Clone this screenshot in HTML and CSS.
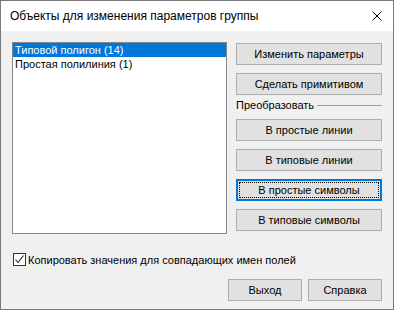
FILE: index.html
```html
<!DOCTYPE html>
<html lang="ru">
<head>
<meta charset="utf-8">
<title>Объекты для изменения параметров группы</title>
<link rel="stylesheet" href="styles.css">
</head>
<body>
<div class="window">
  <div class="titlebar">
    <span class="title">Объекты для изменения параметров группы</span>
    <span class="close">
      <svg width="10" height="10" viewBox="0 0 10 10"><path d="M0.5 0.5 L9.5 9.5 M9.5 0.5 L0.5 9.5" stroke="#000" stroke-width="1" fill="none"/></svg>
    </span>
  </div>
  <div class="content">
    <div class="top">
      <div class="list">
        <div class="item selected">Типовой полигон (14)</div>
        <div class="item">Простая полилиния (1)</div>
      </div>
      <div class="side">
        <button class="btn first">Изменить параметры</button>
        <button class="btn">Сделать примитивом</button>
        <div class="group-label"><span>Преобразовать</span><span class="rule"></span></div>
        <button class="btn">В простые линии</button>
        <button class="btn">В типовые линии</button>
        <button class="btn focused"><span class="focus-rect">В простые символы</span></button>
        <button class="btn">В типовые символы</button>
      </div>
    </div>
    <label class="check-row">
      <span class="checkbox">
        <svg width="11" height="11" viewBox="0 0 11 11"><path d="M1.5 5.5 L4 8.5 L9.5 1.5" stroke="#222" stroke-width="1.1" fill="none"/></svg>
      </span>
      <span>Копировать значения для совпадающих имен полей</span>
    </label>
    <div class="footer">
      <button class="btn small">Выход</button>
      <button class="btn small">Справка</button>
    </div>
  </div>
</div>
</body>
</html>
```
FILE: styles.css
```css
* { box-sizing: border-box; }
html, body { margin: 0; padding: 0; background: #fff; }
.window {
  width: 394px;
  height: 310px;
  border: 1px solid #7a7a7a;
  display: flex;
  flex-direction: column;
  font-family: "Liberation Sans", Arial, sans-serif;
  font-size: 11px;
  color: #000;
}
.titlebar {
  height: 30px;
  background: #fff;
  display: flex;
  align-items: center;
  padding-left: 9px;
  padding-right: 11px;
}
.title {
  flex: 1;
  font-family: "Liberation Sans", Arial, sans-serif;
  font-size: 12px;
  color: #000;
}
.close { width: 10px; height: 10px; display: block; }
.close svg { display: block; }
.content {
  flex: 1;
  background: #f0f0f0;
  padding: 11px 11px 0 11px;
}
.top { display: flex; }
.list {
  width: 215px;
  height: 192px;
  background: #fff;
  border: 1px solid #828790;
}
.item {
  height: 14px;
  line-height: 14px;
  padding-left: 2px;
  white-space: nowrap;
}
.item.selected { background: #0078d7; color: #fff; }
.side {
  margin-left: 9px;
  width: 146px;
  display: flex;
  flex-direction: column;
}
.btn {
  width: 146px;
  height: 22px;
  margin: 0 0 8px 0;
  padding: 0;
  background: #e1e1e1;
  border: 1px solid #adadad;
  font-family: "Liberation Sans", Arial, sans-serif;
  font-size: 11px;
  color: #000;
  display: flex;
  align-items: center;
  justify-content: center;
}
.btn.first { margin-top: 1px; }
.btn.focused { border: 2px solid #0078d7; padding: 1px; }
.focus-rect {
  width: 100%;
  height: 100%;
  border: 1px dotted #000;
  display: flex;
  align-items: center;
  justify-content: center;
}
.group-label {
  height: 16px;
  margin: -6px 0 6px 0;
  display: flex;
  align-items: center;
  gap: 3px;
}
.rule { flex: 1; height: 1px; background: #a0a0a0; }
.check-row {
  display: flex;
  align-items: center;
  gap: 2px;
  margin-top: 14px;
  height: 13px;
  padding-left: 1px;
}
.checkbox {
  width: 13px;
  height: 13px;
  border: 1px solid #333;
  background: #fff;
  display: flex;
  align-items: center;
  justify-content: center;
}
.checkbox svg { display: block; }
.footer {
  display: flex;
  justify-content: flex-end;
  gap: 6px;
  margin-top: 13px;
}
.btn.small { width: 74px; margin: 0; }
```
